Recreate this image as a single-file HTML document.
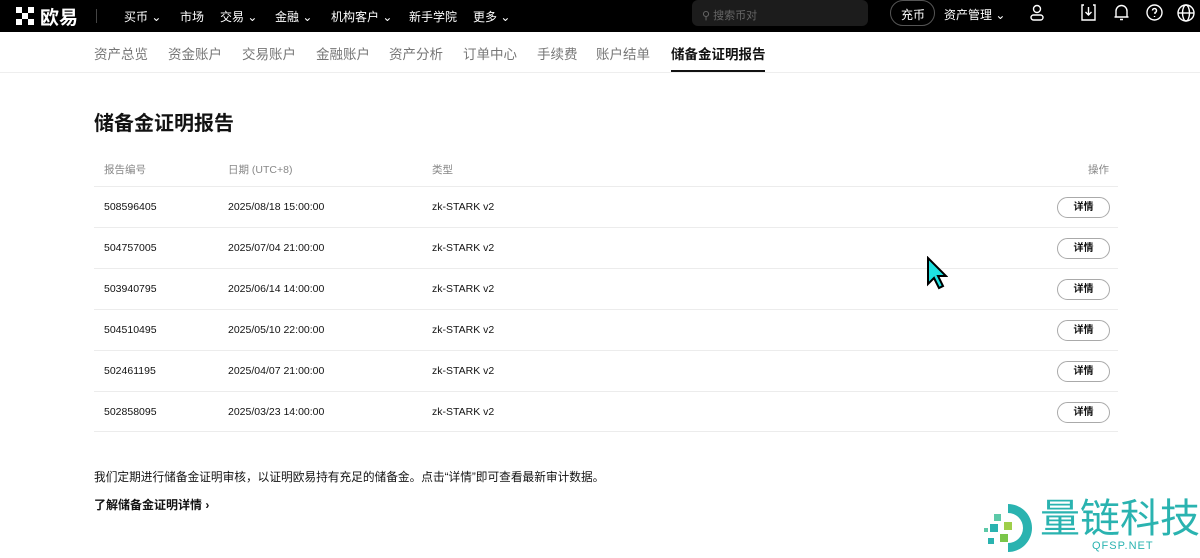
<!DOCTYPE html>
<html><head><meta charset="utf-8"><style>
*{margin:0;padding:0;box-sizing:border-box}
body{width:1200px;height:558px;overflow:hidden;background:#fff;font-family:"Liberation Sans","Noto Sans CJK SC",sans-serif;color:#121212;position:relative}
.top{position:absolute;left:0;top:0;width:1200px;height:32px;background:#000;color:#fff;font-size:12px}
.top span{position:absolute;top:8px;white-space:nowrap}
.sub{position:absolute;top:32px;left:0;width:1200px;height:41px;border-bottom:1px solid #eee}
.sub span{position:absolute;top:11px;font-size:13.5px;color:#777}
.abs{position:absolute;white-space:nowrap}
.row{position:absolute;left:94px;width:1024px;height:41px;border-top:1px solid #ececec;font-size:10.5px}
.row span{position:absolute;top:14px}
.btn{position:absolute;left:963px;top:10px;width:53px;height:21px;border:1px solid #aaa;border-radius:11px;font-size:10px;text-align:center;line-height:19px;font-weight:bold}
svg{position:absolute}
</style></head><body>
<div class="top">
<svg style="left:16px;top:6px" width="20" height="20" viewBox="0 0 20 20" fill="#fff"><rect x="0" y="1" width="6" height="6"/><rect x="12" y="1" width="6" height="6"/><rect x="6" y="7" width="6" height="6"/><rect x="0" y="13" width="6" height="6"/><rect x="12" y="13" width="6" height="6"/></svg>
<span style="left:40px;top:3px;font-size:19px;font-weight:bold">欧易</span>
<span style="left:96px;top:9px;width:1px;height:14px;background:#444"></span>
<span style="left:124px">买币 ⌄</span><span style="left:180px">市场</span><span style="left:220px">交易 ⌄</span><span style="left:275px">金融 ⌄</span><span style="left:331px">机构客户 ⌄</span><span style="left:409px">新手学院</span><span style="left:473px">更多 ⌄</span>
<div class="abs" style="left:692px;top:0;width:176px;height:26px;background:#1c1c1c;border-radius:6px"></div>
<span style="left:702px;top:7px;color:#666;font-size:11px">⚲ 搜索币对</span>
<div class="abs" style="left:890px;top:0;width:45px;height:26px;border:1px solid #555;border-radius:13px"></div>
<span style="left:901px;top:6px">充币</span>
<span style="left:944px;top:6px">资产管理 ⌄</span>
<svg style="left:1028px;top:4px" width="18" height="18" viewBox="0 0 18 18" fill="none" stroke="#fff" stroke-width="1.4"><circle cx="9" cy="5" r="3.5"/><rect x="3" y="11" width="12" height="5" rx="2.5"/></svg>
<svg style="left:1080px;top:4px" width="17" height="17" viewBox="0 0 17 17" fill="none" stroke="#fff" stroke-width="1.4"><path d="M4 1H2v15h13V1h-2M8.5 3v8M5.5 8l3 3 3-3"/></svg>
<svg style="left:1113px;top:4px" width="17" height="17" viewBox="0 0 17 17" fill="none" stroke="#fff" stroke-width="1.4"><path d="M3 13V7a5.5 5.5 0 0 1 11 0v6zM1.5 13h14M7 15.5h3"/></svg>
<svg style="left:1146px;top:4px" width="17" height="17" viewBox="0 0 17 17" fill="none" stroke="#fff" stroke-width="1.4"><circle cx="8.5" cy="8.5" r="7.5"/><path d="M6.5 6.5a2 2 0 1 1 2.5 2v1.5M8.5 12v1"/></svg>
<svg style="left:1177px;top:4px" width="18" height="18" viewBox="0 0 18 18" fill="none" stroke="#fff" stroke-width="1.4"><circle cx="9" cy="9" r="8"/><ellipse cx="9" cy="9" rx="3.5" ry="8"/><path d="M1 9h16"/></svg>
</div>
<div class="sub">
<span style="left:94px">资产总览</span><span style="left:168px">资金账户</span><span style="left:242px">交易账户</span><span style="left:316px">金融账户</span><span style="left:389px">资产分析</span><span style="left:463px">订单中心</span><span style="left:537px">手续费</span><span style="left:596px">账户结单</span>
<span style="left:671px;color:#121212;font-weight:bold">储备金证明报告</span>
<div class="abs" style="left:671px;top:38px;width:94px;height:2px;background:#121212"></div>
</div>
<div class="abs" style="left:94px;top:107px;font-size:20px;font-weight:bold">储备金证明报告</div>
<div class="abs" style="left:104px;top:162px;font-size:10.5px;color:#888">报告编号</div>
<div class="abs" style="left:228px;top:162px;font-size:10.5px;color:#888">日期 (UTC+8)</div>
<div class="abs" style="left:432px;top:162px;font-size:10.5px;color:#888">类型</div>
<div class="abs" style="left:1088px;top:162px;font-size:10.5px;color:#888">操作</div>
<div class="row" style="top:186px"><span style="left:10px">508596405</span><span style="left:134px">2025/08/18 15:00:00</span><span style="left:338px">zk-STARK v2</span><div class="btn">详情</div></div>
<div class="row" style="top:227px"><span style="left:10px">504757005</span><span style="left:134px">2025/07/04 21:00:00</span><span style="left:338px">zk-STARK v2</span><div class="btn">详情</div></div>
<div class="row" style="top:268px"><span style="left:10px">503940795</span><span style="left:134px">2025/06/14 14:00:00</span><span style="left:338px">zk-STARK v2</span><div class="btn">详情</div></div>
<div class="row" style="top:309px"><span style="left:10px">504510495</span><span style="left:134px">2025/05/10 22:00:00</span><span style="left:338px">zk-STARK v2</span><div class="btn">详情</div></div>
<div class="row" style="top:350px"><span style="left:10px">502461195</span><span style="left:134px">2025/04/07 21:00:00</span><span style="left:338px">zk-STARK v2</span><div class="btn">详情</div></div>
<div class="row" style="top:391px;border-bottom:1px solid #ececec"><span style="left:10px">502858095</span><span style="left:134px">2025/03/23 14:00:00</span><span style="left:338px">zk-STARK v2</span><div class="btn">详情</div></div>
<svg style="left:926px;top:256px" width="22" height="34" viewBox="0 0 22 34"><path d="M2 2v26l6-6 5 10 4-2-5-10h8z" fill="#1ee0e0" stroke="#000" stroke-width="2"/></svg>
<div class="abs" style="left:94px;top:468px;font-size:11.7px">我们定期进行储备金证明审核，以证明欧易持有充足的储备金。点击“详情”即可查看最新审计数据。</div>
<div class="abs" style="left:94px;top:496px;font-size:12px;font-weight:bold">了解储备金证明详情 ›</div>
<svg style="left:980px;top:500px" width="58" height="56" viewBox="0 0 58 56"><path d="M28 4a24 24 0 0 1 0 48v-9a15 15 0 0 0 0-30z" fill="#2ab3b0"/><rect x="14" y="14" width="7" height="7" fill="#5cc9a8"/><rect x="24" y="22" width="8" height="8" fill="#9fcf4a"/><rect x="10" y="24" width="8" height="8" fill="#2ab3b0"/><rect x="20" y="34" width="8" height="8" fill="#7bc64a"/><rect x="8" y="38" width="6" height="6" fill="#2ab3b0"/><rect x="4" y="28" width="4" height="4" fill="#5cc9a8"/></svg>
<div class="abs" style="left:1040px;top:497px;font-size:40px;color:#2ab3b0;line-height:44px">量链科技</div>
<div class="abs" style="left:1092px;top:540px;font-size:11px;color:#2ab3b0;letter-spacing:1px">QFSP.NET</div>
</body></html>
